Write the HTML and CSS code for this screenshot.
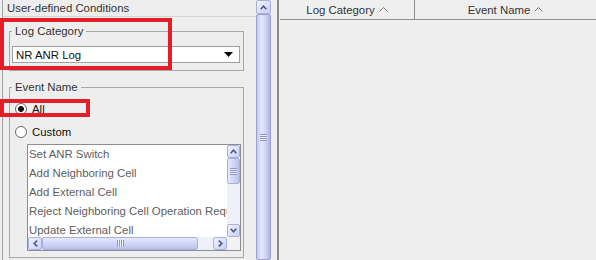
FILE: index.html
```html
<!DOCTYPE html>
<html lang="en">
<head>
<meta charset="UTF-8" />
<title>User-defined Conditions</title>
<link rel="stylesheet" href="styles.css">
</head>
<body>
  <div class="left">
    <div class="conditions">
      <div class="cond-title">User-defined Conditions</div>

      <!-- Log category combo -->
      <fieldset class="group group-log">
        <legend>Log Category</legend>
        <div class="combo">
          <span>NR ANR Log</span>
          <svg class="combo-arrow" width="9" height="5" viewBox="0 0 9 5"><path d="M0 0H9L4.5 5Z" fill="#000"/></svg>
        </div>
      </fieldset>

      <!-- Event name selection -->
      <fieldset class="group group-event">
        <legend>Event Name</legend>
        <label class="radio"><span class="radio-dot checked"></span>All</label>
        <label class="radio"><span class="radio-dot"></span>Custom</label>

        <div class="listbox">
          <div class="list-main">
            <ul class="list-items">
              <li>Set ANR Switch</li>
              <li>Add Neighboring Cell</li>
              <li>Add External Cell</li>
              <li>Reject Neighboring Cell Operation Request</li>
              <li>Update External Cell</li>
            </ul>
            <div class="vscroll">
              <div class="sb-btn">
                <svg width="7" height="5" viewBox="0 0 7 5"><path d="M0.7 4.2L3.5 1.2L6.3 4.2" fill="none" stroke="#4a5888" stroke-width="1.6"/></svg>
              </div>
              <div class="sb-thumb-v"><span class="grip-h"></span></div>
              <div class="sb-track"></div>
              <div class="sb-btn">
                <svg width="7" height="5" viewBox="0 0 7 5"><path d="M0.7 0.8L3.5 3.8L6.3 0.8" fill="none" stroke="#4a5888" stroke-width="1.6"/></svg>
              </div>
            </div>
          </div>
          <div class="hscroll">
            <div class="sb-btn sb-btn-h">
              <svg width="5" height="7" viewBox="0 0 5 7"><path d="M4.2 0.7L1.2 3.5L4.2 6.3" fill="none" stroke="#4a5888" stroke-width="1.6"/></svg>
            </div>
            <div class="sb-thumb-h"><span class="grip-v"></span></div>
            <div class="sb-track"></div>
            <div class="sb-btn sb-btn-h">
              <svg width="5" height="7" viewBox="0 0 5 7"><path d="M0.8 0.7L3.8 3.5L0.8 6.3" fill="none" stroke="#4a5888" stroke-width="1.6"/></svg>
            </div>
            <div class="corner"></div>
          </div>
        </div>
      </fieldset>
    </div>

    <!-- Scrollbar of the conditions panel -->
    <div class="main-scroll">
      <div class="sb-btn main-up">
        <svg width="7" height="5" viewBox="0 0 7 5"><path d="M0.7 4.2L3.5 1.2L6.3 4.2" fill="none" stroke="#4a5888" stroke-width="1.6"/></svg>
      </div>
      <div class="main-thumb"><span class="grip-h"></span></div>
    </div>
  </div>

  <div class="splitter"></div>

  <div class="right">
    <div class="table-header">
      <div class="th th-cat">Log Category
        <svg class="caret" width="9" height="5" viewBox="0 0 9 5"><path d="M0.5 4.5L4.5 0.5L8.5 4.5" fill="none" stroke="#7a7a7a"/></svg>
      </div>
      <div class="th th-event">Event Name
        <svg class="caret" width="9" height="5" viewBox="0 0 9 5"><path d="M0.5 4.5L4.5 0.5L8.5 4.5" fill="none" stroke="#7a7a7a"/></svg>
      </div>
    </div>
  </div>

  <!-- Red highlight marks drawn over the screenshot -->
  <div class="mark mark-log"></div>
  <div class="mark mark-all"></div>
</body>
</html>
```

FILE: styles.css
```css
body {
  margin: 0;
  width: 596px;
  height: 260px;
  overflow: hidden;
  position: relative;
  display: flex;
  background: #eeeeee;
  font-family: "Liberation Sans", Arial, sans-serif;
  font-size: 11.4px;
  color: #222;
}

.left {
  display: flex;
  margin-left: 2px;
  border-left: 1px solid #a3a3a3;
}

.conditions {
  width: 253px;
}

.cond-title {
  height: 16px;
  line-height: 16px;
  padding-left: 4px;
  border-bottom: 1px solid #d6d6d6;
  color: #333;
}

/* Titled group boxes */
.group {
  box-sizing: border-box;
  width: 235px;
  margin: 0 0 0 6px;
  border: 1px solid #a8a8a8;
  min-width: 0;
}
.group legend {
  padding: 0 3px;
  line-height: 14px;
  color: #333;
}
.group-log {
  margin-top: 7px;
  padding: 8px 3px 7px 2px;
}
.group-event {
  margin-top: 9px;
  padding: 5px 3px 6px 2px;
}

.combo {
  box-sizing: border-box;
  height: 17px;
  border: 1px solid #a0a0a0;
  background: #fff;
  padding: 0 6px 0 3px;
  display: flex;
  align-items: center;
  justify-content: space-between;
  color: #111;
}

.radio {
  display: flex;
  align-items: center;
  gap: 5px;
  height: 20px;
  padding-left: 3px;
  color: #111;
}
.radio + .radio {
  margin-top: 3px;
}
.radio-dot {
  box-sizing: border-box;
  width: 12px;
  height: 12px;
  border: 1px solid #6a6a6a;
  border-radius: 50%;
  background: #fff;
}
.radio-dot.checked {
  background: radial-gradient(circle, #111 0 2.6px, #fff 3.2px);
}

/* List with its own scrollbars */
.listbox {
  box-sizing: border-box;
  width: 214px;
  height: 107px;
  margin: 2px 0 0 15px;
  border: 1px solid #8e8e8e;
  background: #fff;
  display: flex;
  flex-direction: column;
}
.list-main {
  flex: 1;
  display: flex;
  min-height: 0;
}
.list-items {
  flex: 1;
  min-width: 0;
  overflow: hidden;
  list-style: none;
  margin: 0;
  padding: 0;
}
.list-items li {
  line-height: 19px;
  padding-left: 1px;
  white-space: nowrap;
  color: #606060;
}

.vscroll {
  width: 13px;
  display: flex;
  flex-direction: column;
}
.hscroll {
  height: 13px;
  display: flex;
}

.sb-btn {
  box-sizing: border-box;
  width: 13px;
  height: 13px;
  border: 1px solid #a9b0dc;
  border-radius: 2px;
  background: linear-gradient(135deg, #f1f3fe, #c9cff4);
  display: flex;
  align-items: center;
  justify-content: center;
  flex: none;
}
.sb-btn-h {
  width: 14px;
}
.sb-track {
  flex: 1;
  background: #eef0fa;
}
.corner {
  width: 13px;
  background: #f2f2f2;
}

.sb-thumb-v {
  box-sizing: border-box;
  height: 26px;
  border: 1px solid #a9b0dc;
  border-radius: 2px;
  background: linear-gradient(90deg, #e6e9fd, #c9cef4 70%, #b9bfec);
  display: flex;
  align-items: center;
  justify-content: center;
}
.sb-thumb-h {
  box-sizing: border-box;
  width: 156px;
  border: 1px solid #a9b0dc;
  border-radius: 2px;
  background: linear-gradient(180deg, #e6e9fd, #c9cef4 70%, #b9bfec);
  display: flex;
  align-items: center;
  justify-content: center;
}

.grip-h {
  width: 7px;
  height: 7px;
  background: repeating-linear-gradient(180deg, #8d95c9 0 1px, #eef0fd 1px 2px);
}
.grip-v {
  width: 7px;
  height: 7px;
  background: repeating-linear-gradient(90deg, #8d95c9 0 1px, #eef0fd 1px 2px);
}

/* Main panel scrollbar */
.main-scroll {
  width: 15px;
  display: flex;
  flex-direction: column;
}
.main-up {
  width: 15px;
  height: 14px;
}
.main-thumb {
  flex: 1;
  box-sizing: border-box;
  border: 1px solid #9aa1d2;
  border-radius: 2px;
  background: linear-gradient(90deg, #c4c9ee, #e6e9fc 35%, #cdd2f4 70%, #aeb4e2);
  display: flex;
  align-items: center;
  justify-content: center;
}

.splitter {
  width: 2px;
  margin-left: 6px;
  background: #8a8a8a;
}

/* Result table */
.right {
  flex: 1;
  margin-left: 1px;
}
.table-header {
  display: flex;
  box-sizing: border-box;
  height: 20px;
  border-bottom: 1px solid #8f8f8f;
  background: #efefef;
  color: #333;
}
.th {
  display: flex;
  align-items: center;
  justify-content: center;
}
.th-cat {
  width: 135px;
  box-sizing: border-box;
  border-right: 1px solid #8f8f8f;
}
.th-event {
  flex: 1;
}
.caret {
  margin-left: 4px;
}

.mark {
  position: absolute;
  box-sizing: border-box;
  border: 4px solid #e31e28;
}
.mark-log {
  left: 0;
  top: 18px;
  width: 172px;
  height: 52px;
}
.mark-all {
  left: 0;
  top: 99px;
  width: 90px;
  height: 18px;
}
```
